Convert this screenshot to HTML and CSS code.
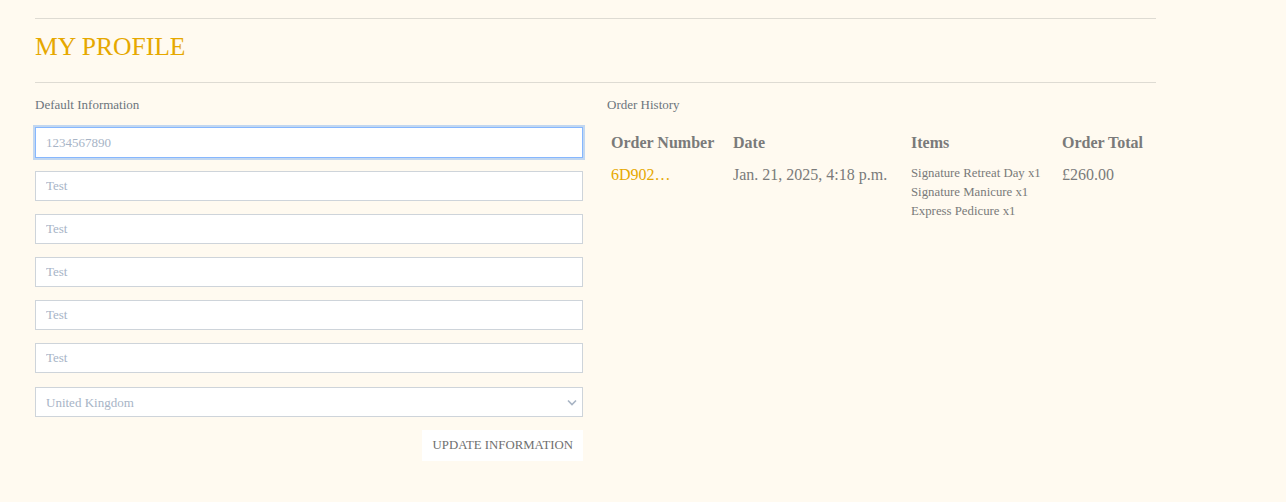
FILE: index.html
```html
<!DOCTYPE html>
<html>
<head>
<meta charset="utf-8">
<link rel="stylesheet" href="styles.css">
</head>
<body>
<div class="container">
  <hr class="rule">
  <h1 class="title">MY PROFILE</h1>
  <hr class="rule">
  <div class="columns">
    <form class="profile">
      <p class="label">Default Information</p>
      <input class="field focused" type="text" placeholder="1234567890">
      <input class="field" type="text" placeholder="Test">
      <input class="field" type="text" placeholder="Test">
      <input class="field" type="text" placeholder="Test">
      <input class="field" type="text" placeholder="Test">
      <input class="field" type="text" placeholder="Test">
      <div class="select-wrap">
        <select class="field select"><option>United Kingdom</option></select>
        <svg class="chev" width="10" height="7" viewBox="0 0 10 7"><path d="M1 1.5 L5 5.5 L9 1.5" fill="none" stroke="#a8b4c4" stroke-width="1.6"/></svg>
      </div>
      <div class="actions"><button type="button" class="btn">UPDATE INFORMATION</button></div>
    </form>
    <div class="history">
      <p class="label">Order History</p>
      <table class="orders">
        <thead>
          <tr><th class="c1">Order Number</th><th class="c2">Date</th><th class="c3">Items</th><th class="c4">Order Total</th></tr>
        </thead>
        <tbody>
          <tr>
            <td class="num">6D902…</td>
            <td>Jan. 21, 2025, 4:18 p.m.</td>
            <td class="items">Signature Retreat Day x1<br>Signature Manicure x1<br>Express Pedicure x1</td>
            <td>£260.00</td>
          </tr>
        </tbody>
      </table>
    </div>
  </div>
</div>
</body>
</html>
```

FILE: styles.css
```css
html, body {
  margin: 0;
  padding: 0;
  background: #fffaf0;
  font-family: "Liberation Serif", "Times New Roman", serif;
  color: #6c757d;
}
.container {
  width: 1121px;
  margin-left: 35px;
  padding-top: 18px;
}
.rule {
  border: 0;
  border-top: 1px solid #dedbd3;
  margin: 0;
  height: 0;
}
.title {
  font-weight: normal;
  font-size: 25.6px;
  line-height: 30px;
  color: #e6a800;
  margin: 0;
  padding: 13px 0 20px;
}
.columns {
  display: flex;
  gap: 24px;
}
.profile {
  width: 548px;
  display: flex;
  flex-direction: column;
}
.history {
  flex: 1;
}
.label {
  font-size: 13px;
  line-height: 14px;
  margin: 15px 0 15px;
  color: #6c757d;
}
.field {
  box-sizing: border-box;
  width: 100%;
  height: 30px;
  border: 1px solid #ced4da;
  background: #fff;
  font-family: "Liberation Serif", "Times New Roman", serif;
  font-size: 13px;
  padding: 0 10px;
  margin: 0 0 13px;
  color: #a0aec0;
  outline: none;
}
.field.focused { height: 31px; margin-bottom: 13px; }
.field::placeholder { color: #a7b4c6; }
.field.focused {
  border-color: #86b7fe;
  box-shadow: 0 0 0 2px #c2d7f0;
}
.select-wrap { position: relative; margin-top: 1px; }
.select {
  appearance: none;
  -webkit-appearance: none;
  color: #a7b4c6;
  margin-bottom: 13px;
}
.chev {
  position: absolute;
  right: 6px;
  top: 12px;
}
.actions {
  display: flex;
  justify-content: flex-end;
}
.btn {
  background: #fff;
  border: 0;
  font-family: "Liberation Serif", "Times New Roman", serif;
  font-size: 12.8px;
  color: #6f6f6f;
  height: 31px;
  padding: 0 10px 0 11px;
}
.orders {
  border-collapse: collapse;
  margin-top: 2px;
}
.orders th {
  text-align: left;
  font-size: 16px;
  font-weight: bold;
  color: #7a7a7a;
  padding: 7px 4px 7px;
  vertical-align: top;
}
.orders td {
  font-size: 16px;
  color: #7a7a7a;
  padding: 6px 4px;
  vertical-align: top;
  line-height: 20px;
}
.c1 { width: 114px; }
.c2 { width: 170px; }
.c3 { width: 143px; }
.c4 { width: 90px; }
.num { color: #e6a800 !important; }
.orders td.items {
  font-size: 12.8px;
  line-height: 19px;
  padding-top: 5px;
}
```
